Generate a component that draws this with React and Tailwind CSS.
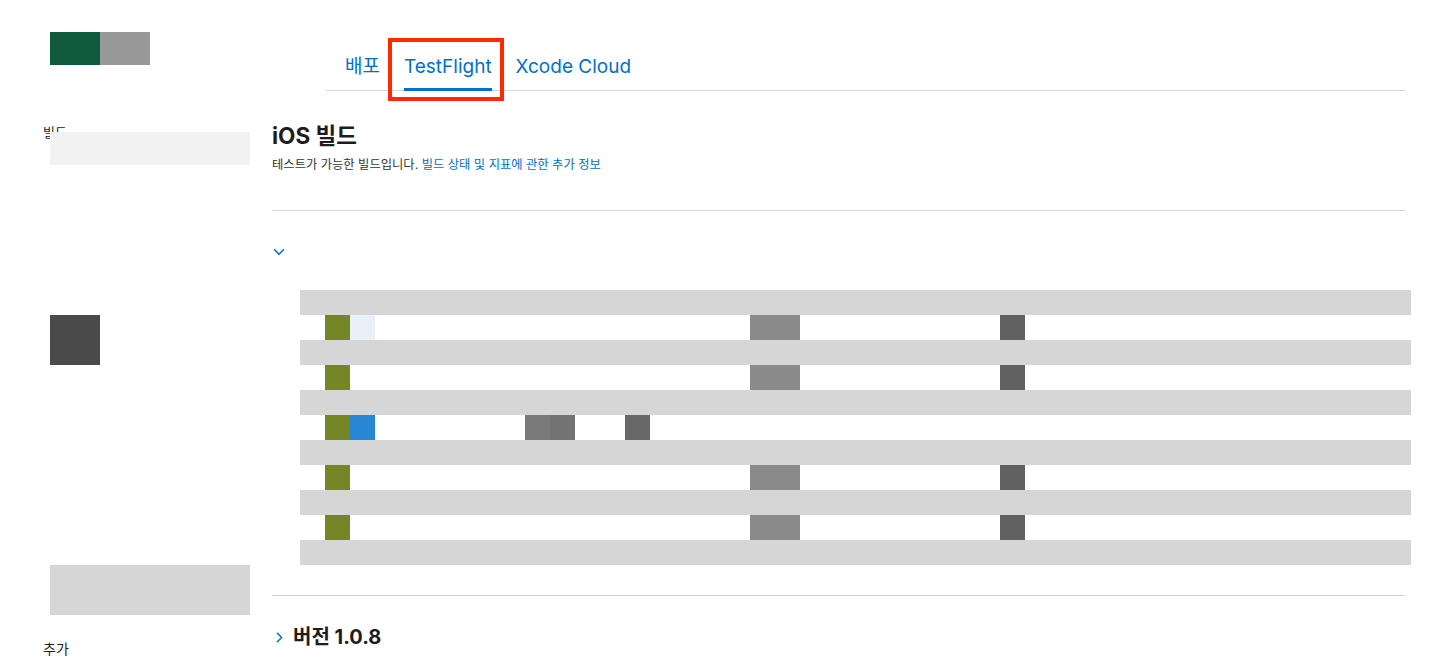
import { ChevronDown, ChevronRight } from 'lucide-react';

const rows = [
  [
    { x: 25, w: 25, c: 'bg-[#758626]' },
    { x: 50, w: 25, c: 'bg-[#e8f0fa]' },
    { x: 450, w: 50, c: 'bg-[#8a8a8a]' },
    { x: 700, w: 25, c: 'bg-[#616161]' },
  ],
  [
    { x: 25, w: 25, c: 'bg-[#758626]' },
    { x: 450, w: 50, c: 'bg-[#8a8a8a]' },
    { x: 700, w: 25, c: 'bg-[#616161]' },
  ],
  [
    { x: 25, w: 25, c: 'bg-[#758626]' },
    { x: 50, w: 25, c: 'bg-[#2787d4]' },
    { x: 225, w: 25, c: 'bg-[#7a7a7a]' },
    { x: 250, w: 25, c: 'bg-[#737373]' },
    { x: 325, w: 25, c: 'bg-[#686868]' },
  ],
  [
    { x: 25, w: 25, c: 'bg-[#758626]' },
    { x: 450, w: 50, c: 'bg-[#8a8a8a]' },
    { x: 700, w: 25, c: 'bg-[#616161]' },
  ],
  [
    { x: 25, w: 25, c: 'bg-[#758626]' },
    { x: 450, w: 50, c: 'bg-[#8a8a8a]' },
    { x: 700, w: 25, c: 'bg-[#616161]' },
  ],
];

const BuildRow = ({ cells }) => {
  let pos = 0;
  return (
    <div className="flex h-[25px]">
      {cells.map((cell, i) => {
        const gap = cell.x - pos;
        pos = cell.x + cell.w;
        return (
          <div key={i} className={cell.c} style={{ width: cell.w, marginLeft: gap }} />
        );
      })}
    </div>
  );
};

const App = () => {
  return (
    <div className="flex w-[1447px] h-[665px] overflow-hidden bg-white font-['Inter','Noto_Sans_CJK_KR',sans-serif] text-[#1d1d1f]">
      {/* Sidebar */}
      <aside className="w-[272px] shrink-0 pl-[43px] pt-[32px]">
        <div className="flex ml-[7px]">
          <div className="w-[50px] h-[33px] bg-[#0f5a3f]" />
          <div className="w-[50px] h-[33px] bg-[#999999]" />
        </div>
        <div className="mt-[59px] text-[13px] leading-[16px]">빌드</div>
        <div className="relative -mt-[8px] ml-[7px] w-[200px] h-[33px] bg-[#f2f2f2]" />
        <div className="ml-[7px] mt-[150px] w-[50px] h-[50px] bg-[#4a4a4a]" />
        <div className="ml-[7px] mt-[200px] w-[200px] h-[50px] bg-[#d6d6d6]" />
        <div className="mt-[25px] text-[14px] leading-[18px]">추가</div>
      </aside>

      {/* Main */}
      <main className="flex-1 pr-[42px]">
        <nav className="ml-[54px] mt-[53px] flex gap-[24px] pl-[19px] border-b border-[#d6d6d6] text-[19px] leading-[28px] text-[#0070c9]">
          <span className="pb-[9px]">배포</span>
          <span className="relative pb-[9px]">
            TestFlight
            <span className="absolute left-0 right-0 bottom-[-1px] h-[3px] bg-[#0070c9]" />
            <span className="absolute left-[-16px] right-[-12px] top-[-15px] bottom-[-11px] border-[4px] border-[#ff2a00]" />
          </span>
          <span className="pb-[9px]">Xcode Cloud</span>
        </nav>

        <h1 className="mt-[31px] text-[22.5px] leading-[28px] font-bold">iOS 빌드</h1>
        <p className="mt-[7px] text-[12.3px] leading-[16px] text-[#333333]">
          테스트가 가능한 빌드입니다.{' '}
          <span className="text-[#0070c9]">빌드 상태 및 지표에 관한 추가 정보</span>
        </p>

        <div className="mt-[37px] border-t border-[#d6d6d6]" />

        <div className="mt-[32px] text-[#0070c9]">
          <ChevronDown size={18} strokeWidth={2.2} className="-ml-[2px]" />
        </div>

        <div className="mt-[29px] ml-[28px] -mr-[6px]">
          {rows.map((cells, i) => (
            <div key={i}>
              <div className="h-[25px] bg-[#d6d6d6]" />
              <BuildRow cells={cells} />
            </div>
          ))}
          <div className="h-[25px] bg-[#d6d6d6]" />
        </div>

        <div className="mt-[30px] border-t border-[#d6d6d6]" />

        <div className="mt-[29px] flex items-center gap-[5px]">
          <ChevronRight size={17} strokeWidth={2.2} className="text-[#0070c9] -ml-[1px]" />
          <span className="text-[20px] leading-[24px] font-bold">버전 1.0.8</span>
        </div>
      </main>
    </div>
  );
};

export default App;
